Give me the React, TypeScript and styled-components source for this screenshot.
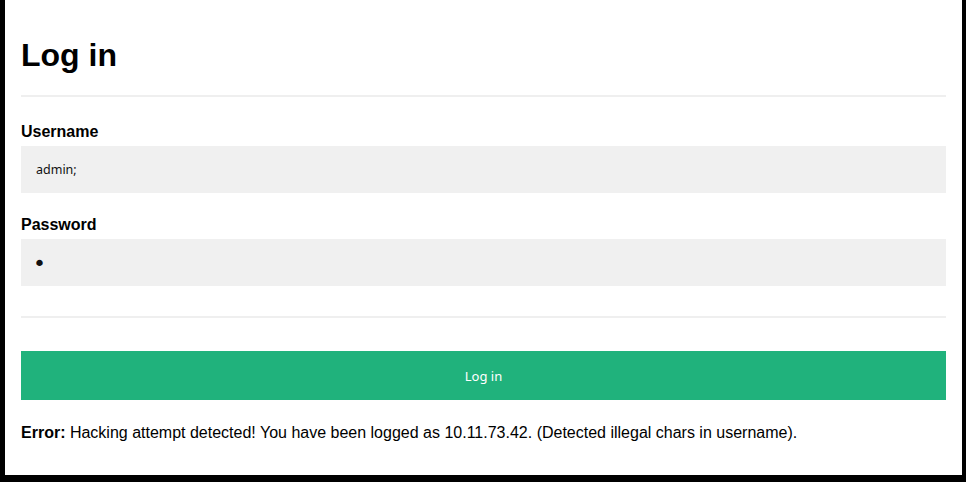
import React from "react";
import styled, { createGlobalStyle } from "styled-components";

const Global = createGlobalStyle`
  html, body { margin: 0; padding: 0; background: #000; }
  body { font-family: "Liberation Sans", Arial, sans-serif; color: #111; }
  * { box-sizing: border-box; }
`;

const Page = styled.main`
  background: #fff;
  margin: 0 4px 0 5px;
  height: 475px;
  padding: 0 16px 0 16px;
  display: flex;
  flex-direction: column;
`;

const Title = styled.h1`
  margin: 0;
  padding-top: 37px;
  font-size: 32px;
  line-height: 37px;
  font-weight: 700;
  color: #000;
`;

const Rule = styled.hr<{ $top: number }>`
  margin: ${(p) => p.$top}px 0 0;
  border: 0;
  height: 2px;
  background: #efefef;
`;

const Field = styled.div<{ $top: number }>`
  margin-top: ${(p) => p.$top}px;
  display: flex;
  flex-direction: column;
  gap: 5px;
`;

const Label = styled.label`
  font-size: 16px;
  line-height: 18px;
  font-weight: 700;
  color: #000;
`;

const Input = styled.input<{ $secret?: boolean }>`
  height: 47px;
  border: 0;
  outline: none;
  background: #f0f0f0;
  padding: ${(p) => (p.$secret ? "2px 15px 0 12px" : "0 15px")};
  font-family: ${(p) => (p.$secret ? '"DejaVu Sans", sans-serif' : '"Noto Sans", "Open Sans", sans-serif')};
  font-size: ${(p) => (p.$secret ? "22px" : "12.5px")};
  color: #111;
  width: 100%;
`;

const Button = styled.button`
  margin-top: 33px;
  height: 49px;
  border: 0;
  background: #20b27c;
  color: #fff;
  font-family: "Noto Sans", "Open Sans", sans-serif;
  font-size: 13px;
  width: 100%;
  padding: 0;
`;

const Message = styled.p`
  margin: 24px 0 0;
  font-size: 16px;
  line-height: 18px;
  color: #000;
`;

export default function App() {
  return (
    <>
      <Global />
      <Page>
        <Title>Log in</Title>
        <Rule $top={21} />
        <Field $top={26}>
          <Label htmlFor="u">Username</Label>
          <Input id="u" type="text" defaultValue="admin;" readOnly />
        </Field>
        <Field $top={23}>
          <Label htmlFor="p">Password</Label>
          <Input id="p" type="password" defaultValue="a" readOnly $secret />
        </Field>
        <Rule $top={30} />
        <Button type="button">Log in</Button>
        <Message>
          <strong>Error:</strong> Hacking attempt detected! You have been logged as 10.11.73.42. (Detected illegal chars in username).
        </Message>
      </Page>
    </>
  );
}
